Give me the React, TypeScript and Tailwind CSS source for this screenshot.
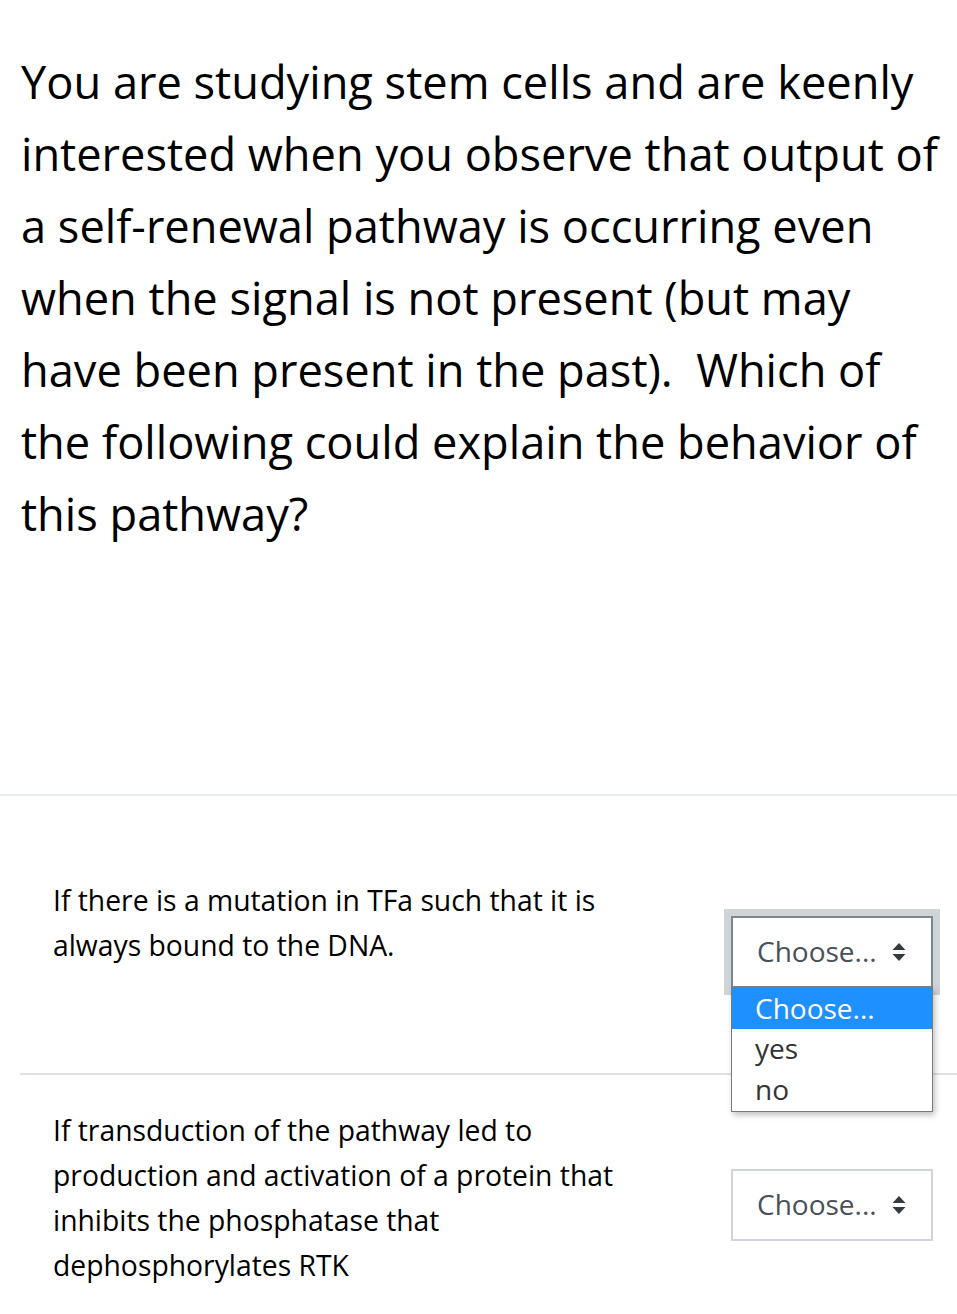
import React from "react";

function Arrows() {
  return (
    <svg width="14" height="20" viewBox="0 0 14 20" className="shrink-0">
      <path d="M7 1 L13.5 8 H0.5 Z" fill="#343a40" />
      <path d="M7 19 L13.5 12 H0.5 Z" fill="#343a40" />
    </svg>
  );
}

function SelectBox({ focused }: { focused?: boolean }) {
  return (
    <div
      className={
        "w-[202px] h-[72px] bg-white flex items-center justify-between pl-[24px] pr-[25px] text-[28px] text-[#495057] " +
        (focused
          ? "border-2 border-[#7d8791] shadow-[0_0_0_7px_#d0d4d9]"
          : "border-2 border-[#ced4da]")
      }
    >
      <span className="leading-none pb-[2px]">Choose...</span>
      <Arrows />
    </div>
  );
}

export default function App() {
  return (
    <div className="w-[957px] min-h-[1314px] bg-white text-black font-['Open_Sans',sans-serif] overflow-hidden">
      <div className="pt-[46px] pl-[21px] text-[45.2px] leading-[72px] whitespace-nowrap">
        You are studying stem cells and are keenly
        <br />
        interested when you observe that output of
        <br />
        a self-renewal pathway is occurring even
        <br />
        when the signal is not present (but may
        <br />
        have been present in the past).&nbsp; Which of
        <br />
        the following could explain the behavior of
        <br />
        this pathway?
      </div>
      <div className="mt-[244px] border-t-2 border-[#e9ecef]" />
      <div className="flex items-start pt-[82px]">
        <div className="pl-[53px] w-[731px] text-[28.3px] leading-[45px] whitespace-nowrap">
          If there is a mutation in TFa such that it is
          <br />
          always bound to the DNA.
        </div>
        <div className="relative mt-[38px]">
          <SelectBox focused />
          <div className="absolute left-0 top-[71px] w-[202px] bg-white border border-[#7a7a7a] shadow-[2px_3px_6px_rgba(0,0,0,0.25)] text-[28px] z-10">
            <div className="h-[41px] bg-[#1e90ff] text-white pl-[23px] flex items-center">
              <span className="leading-none pb-[2px]">Choose...</span>
            </div>
            <div className="h-[41px] text-[#333] pl-[23px] flex items-center">
              <span className="leading-none pb-[4px]">yes</span>
            </div>
            <div className="h-[41px] text-[#333] pl-[23px] flex items-center">
              <span className="leading-none pb-[4px]">no</span>
            </div>
          </div>
        </div>
      </div>
      <div className="ml-[20px] mt-[85px] border-t-2 border-[#dee2e6]" />
      <div className="flex items-start pt-[33px]">
        <div className="pl-[53px] w-[731px] text-[28.3px] leading-[45px] whitespace-nowrap">
          If transduction of the pathway led to
          <br />
          production and activation of a protein that
          <br />
          inhibits the phosphatase that
          <br />
          dephosphorylates RTK
        </div>
        <div className="mt-[61px]">
          <SelectBox />
        </div>
      </div>
    </div>
  );
}
